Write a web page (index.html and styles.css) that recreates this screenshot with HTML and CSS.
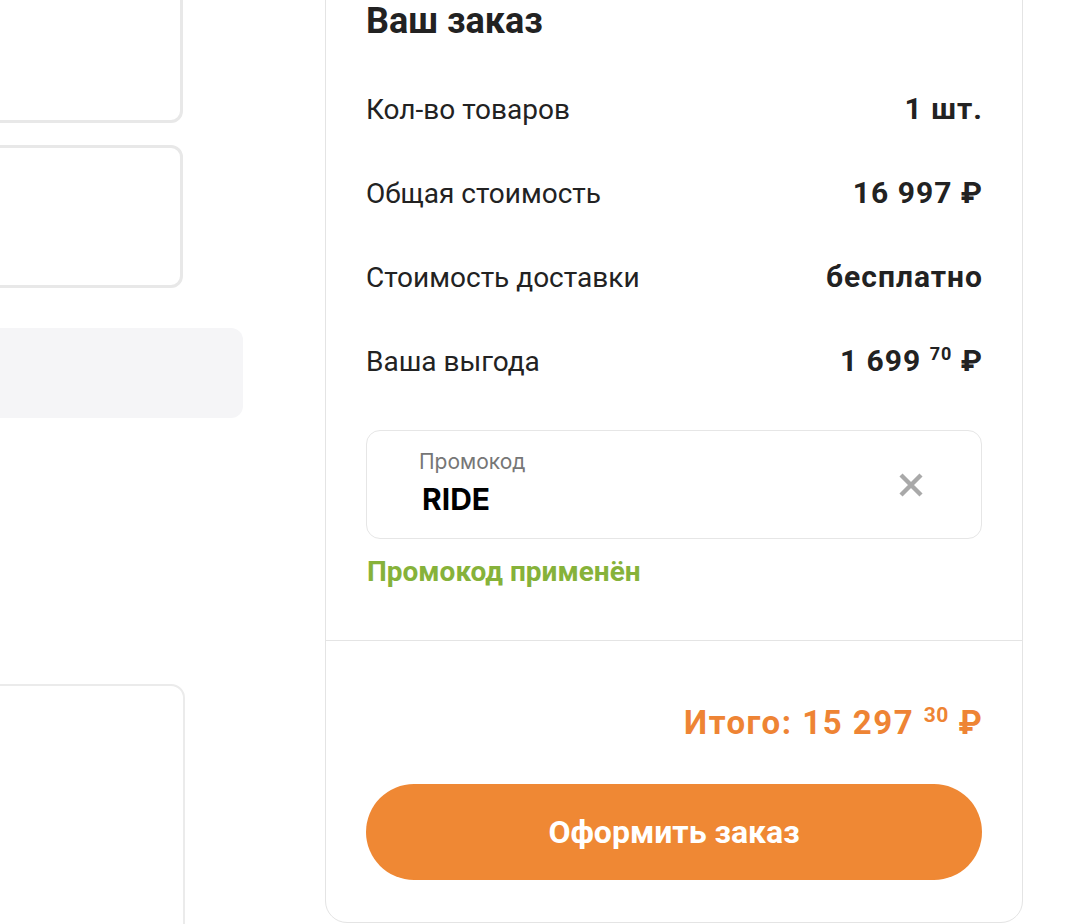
FILE: index.html
```html
<!DOCTYPE html>
<html lang="ru">

<head>
    <meta charset="utf-8">
    <meta name="viewport" content="width=device-width, initial-scale=1.0">
    <title>Корзина</title>
    <link rel="stylesheet" href="styles.css">
</head>

<body>
    <div class="page">
        <div class="left">
            <div class="card card-first"></div>
            <div class="card card-second"></div>
            <div class="note"></div>
            <div class="card card-last"></div>
        </div>

        <div class="order">
            <div class="order-top">
                <h2 class="order-title">Ваш заказ</h2>

                <div class="row">
                    <span class="row-label">Кол-во товаров</span>
                    <span class="row-value">1 шт.</span>
                </div>
                <div class="row">
                    <span class="row-label">Общая стоимость</span>
                    <span class="row-value">16 997 ₽</span>
                </div>
                <div class="row">
                    <span class="row-label">Стоимость доставки</span>
                    <span class="row-value">бесплатно</span>
                </div>
                <div class="row">
                    <span class="row-label">Ваша выгода</span>
                    <span class="row-value">1 699 <sup class="kop">70</sup> ₽</span>
                </div>

                <div class="promo">
                    <div class="promo-field">
                        <span class="promo-label">Промокод</span>
                        <span class="promo-code">RIDE</span>
                    </div>
                    <button class="promo-clear" type="button" aria-label="Удалить промокод">
                        <svg width="26" height="26" viewBox="0 0 26 26">
                            <path d="M3 3 L23 23 M23 3 L3 23" stroke="#a9a9a9" stroke-width="4.4" fill="none" />
                        </svg>
                    </button>
                </div>
                <p class="promo-ok">Промокод применён</p>
            </div>

            <div class="order-bottom">
                <p class="total">Итого: 15 297 <sup class="kop-total">30</sup> ₽</p>
                <button class="checkout" type="button">Оформить заказ</button>
            </div>
        </div>
    </div>
</body>

</html>
```

FILE: styles.css
```css
html,
body {
    margin: 0;
    height: 100%;
    overflow: hidden;
    background-color: #ffffff;
}

body {
    font-family: 'Roboto', 'Liberation Sans', sans-serif;
    color: #222222;
}

.page {
    display: flex;
    align-items: flex-start;
    gap: 82px;
    height: calc(100vh + 30px);
    margin-top: -30px;
    overflow: hidden;
}

/* левая колонка */

.left {
    display: flex;
    flex-direction: column;
    align-items: flex-start;
    width: 343px;
    margin-left: -100px;
    flex-shrink: 0;
}

.card {
    box-sizing: border-box;
    width: 283px;
    border: 3px solid #e8e8e8;
    border-radius: 12px;
    background-color: #ffffff;
}

.card-first {
    height: 153px;
}

.card-second {
    height: 143px;
    margin-top: 22px;
}

.note {
    width: 343px;
    height: 90px;
    margin-top: 40px;
    border-radius: 12px;
    background-color: #f5f5f7;
}

.card-last {
    width: 285px;
    height: 300px;
    margin-top: 266px;
    border-width: 2px;
    border-color: #ebebeb;
    border-radius: 14px;
}

/* блок заказа */

.order {
    box-sizing: border-box;
    width: 698px;
    border: 1.5px solid #e4e4e4;
    border-radius: 22px;
    background-color: #ffffff;
}

.order-top {
    padding: 30px 40px 52px 40px;
    border-bottom: 1.5px solid #e4e4e4;
}

.order-title {
    margin: 0 0 26px 0;
    font-size: 36px;
    line-height: 40px;
    font-weight: 700;
}

.row {
    display: flex;
    justify-content: space-between;
    align-items: center;
    height: 84px;
}

.row-label {
    font-size: 28px;
}

.row-value {
    margin-right: -1px;
    font-size: 30px;
    line-height: 36px;
    font-weight: 700;
    letter-spacing: 1px;
}

.kop {
    font-size: 18px;
    vertical-align: 11px;
    line-height: 0;
}

/* промокод */

.promo {
    box-sizing: border-box;
    display: flex;
    align-items: center;
    justify-content: space-between;
    height: 109px;
    margin-top: 27px;
    padding: 0 57px 0 52px;
    border: 1.5px solid #e6e6e6;
    border-radius: 14px;
}

.promo-field {
    display: flex;
    flex-direction: column;
    gap: 8px;
    padding-bottom: 4px;
}

.promo-label {
    font-family: 'Inter', 'Roboto', sans-serif;
    font-size: 21px;
    line-height: 24px;
    color: #767676;
}

.promo-code {
    font-family: 'Inter', 'Roboto', sans-serif;
    font-size: 30px;
    line-height: 34px;
    font-weight: 700;
    color: #000000;
    padding-left: 3px;
}

.promo-clear {
    display: flex;
    padding: 0;
    border: none;
    background: none;
}

.promo-ok {
    margin: 17px 0 0 1px;
    font-size: 28px;
    line-height: 32px;
    font-weight: 700;
    color: #86b23a;
}

/* итого */

.order-bottom {
    display: flex;
    flex-direction: column;
    padding: 62px 40px 42px 40px;
}

.total {
    margin: 0 -1.4px 0 0;
    text-align: right;
    font-size: 33px;
    line-height: 40px;
    font-weight: 700;
    letter-spacing: 1.5px;
    color: #ee8434;
}

.kop-total {
    font-size: 21px;
    vertical-align: 12px;
    line-height: 0;
    letter-spacing: 0.5px;
}

.checkout {
    height: 96px;
    margin-top: 41px;
    border: none;
    border-radius: 48px;
    background-color: #ef8834;
    color: #ffffff;
    font-family: 'Roboto', 'Liberation Sans', sans-serif;
    font-size: 32px;
    font-weight: 700;
}
```
